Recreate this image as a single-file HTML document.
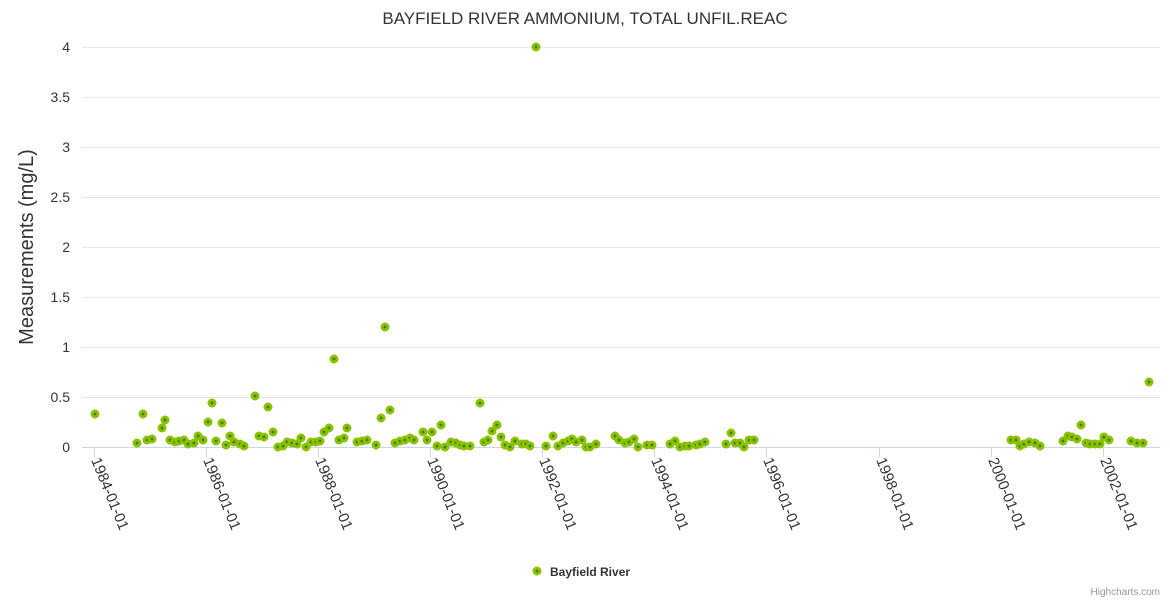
<!DOCTYPE html>
<html><head><meta charset="utf-8"><style>
html,body{margin:0;padding:0;background:#fff;width:1170px;height:600px;overflow:hidden}
svg{font-family:"Liberation Sans","DejaVu Sans",sans-serif;display:block}
</style></head><body>
<svg width="1170" height="600" viewBox="0 0 1170 600" xmlns="http://www.w3.org/2000/svg">
<text x="585" y="24" text-anchor="middle" font-size="17" fill="#333">BAYFIELD RIVER AMMONIUM, TOTAL UNFIL.REAC</text>
<g stroke="#e6e6e6" stroke-width="1">
<line x1="82" x2="1160" y1="47.5" y2="47.5"/><line x1="82" x2="1160" y1="97.5" y2="97.5"/>
<line x1="82" x2="1160" y1="147.5" y2="147.5"/><line x1="82" x2="1160" y1="197.5" y2="197.5"/>
<line x1="82" x2="1160" y1="247.5" y2="247.5"/><line x1="82" x2="1160" y1="297.5" y2="297.5"/>
<line x1="82" x2="1160" y1="347.5" y2="347.5"/><line x1="82" x2="1160" y1="397.5" y2="397.5"/>
</g>
<line x1="82" x2="1160" y1="447.5" y2="447.5" stroke="#ccd6eb"/>
<g fill="#333" font-size="14" text-anchor="end">
<text x="70" y="52">4</text><text x="70" y="102">3.5</text><text x="70" y="152">3</text>
<text x="70" y="202">2.5</text><text x="70" y="252">2</text><text x="70" y="302">1.5</text>
<text x="70" y="352">1</text><text x="70" y="402">0.5</text><text x="70" y="452">0</text>
</g>
<text transform="translate(33 247) rotate(-90)" text-anchor="middle" font-size="20" fill="#333">Measurements (mg/L)</text>
<g stroke="#ccd6eb">
<line x1="94.5" x2="94.5" y1="447" y2="457"/><line x1="206.5" x2="206.5" y1="447" y2="457"/>
<line x1="318.5" x2="318.5" y1="447" y2="457"/><line x1="430.5" x2="430.5" y1="447" y2="457"/>
<line x1="542.5" x2="542.5" y1="447" y2="457"/><line x1="654.5" x2="654.5" y1="447" y2="457"/>
<line x1="766.5" x2="766.5" y1="447" y2="457"/><line x1="879.5" x2="879.5" y1="447" y2="457"/>
<line x1="991.5" x2="991.5" y1="447" y2="457"/><line x1="1103.5" x2="1103.5" y1="447" y2="457"/>
</g>
<g fill="#333" font-size="15">
<text transform="translate(91 460) rotate(68)">1984-01-01</text>
<text transform="translate(203 460) rotate(68)">1986-01-01</text>
<text transform="translate(315 460) rotate(68)">1988-01-01</text>
<text transform="translate(427 460) rotate(68)">1990-01-01</text>
<text transform="translate(539 460) rotate(68)">1992-01-01</text>
<text transform="translate(651 460) rotate(68)">1994-01-01</text>
<text transform="translate(763 460) rotate(68)">1996-01-01</text>
<text transform="translate(876 460) rotate(68)">1998-01-01</text>
<text transform="translate(988 460) rotate(68)">2000-01-01</text>
<text transform="translate(1100 460) rotate(68)">2002-01-01</text>
</g>
<g id="pts" fill="#3a8a00" stroke="#8cc000" stroke-width="3"></g>
<circle cx="537" cy="571" r="3" fill="#3a8a00" stroke="#8cc000" stroke-width="3"/>
<text x="550" y="576" font-size="12" font-weight="bold" fill="#333">Bayfield River</text>
<text x="1160" y="595" text-anchor="end" font-size="10" fill="#999">Highcharts.com</text>
</svg>
<script>
var p=[95,414,137,443,143,414,147,440,152,439,162,428,165,420,170,440,175,442,179,441,184,440,188,444,194,443,198,436,203,440,208,422,212,403,216,441,222,423,226,445,230,436,234,442,240,444,244,446,255,396,259,436,264,437,268,407,273,432,278,447,283,446,287,442,292,443,297,444,301,438,306,447,311,442,316,442,320,441,324,432,329,428,334,359,339,440,344,438,347,428,357,442,362,441,367,440,376,445,381,418,385,327,390,410,395,443,400,441,405,440,410,438,414,440,423,432,427,440,432,432,437,446,441,425,445,447,451,442,456,443,460,445,464,446,470,446,480,403,484,442,488,440,492,431,497,425,501,437,505,445,510,447,515,441,522,444,526,444,530,446,536,47,546,446,553,436,558,446,563,443,568,441,572,439,576,442,582,440,586,447,590,447,596,444,615,436,619,440,625,443,629,442,634,439,638,447,647,445,652,445,670,444,675,441,680,447,685,446,689,446,696,445,700,444,705,442,726,444,731,433,735,443,740,443,744,447,749,440,754,440,1011,440,1016,440,1020,446,1024,444,1029,442,1035,443,1040,446,1063,441,1068,436,1072,437,1077,439,1081,425,1086,443,1090,444,1095,444,1100,444,1104,437,1109,440,1131,441,1137,443,1143,443,1149,382];
var g=document.getElementById('pts'),s='';
for(var i=0;i<p.length;i+=2)s+='<circle cx="'+p[i]+'" cy="'+p[i+1]+'" r="3"/>';
g.innerHTML=s;
</script>
</body></html>
